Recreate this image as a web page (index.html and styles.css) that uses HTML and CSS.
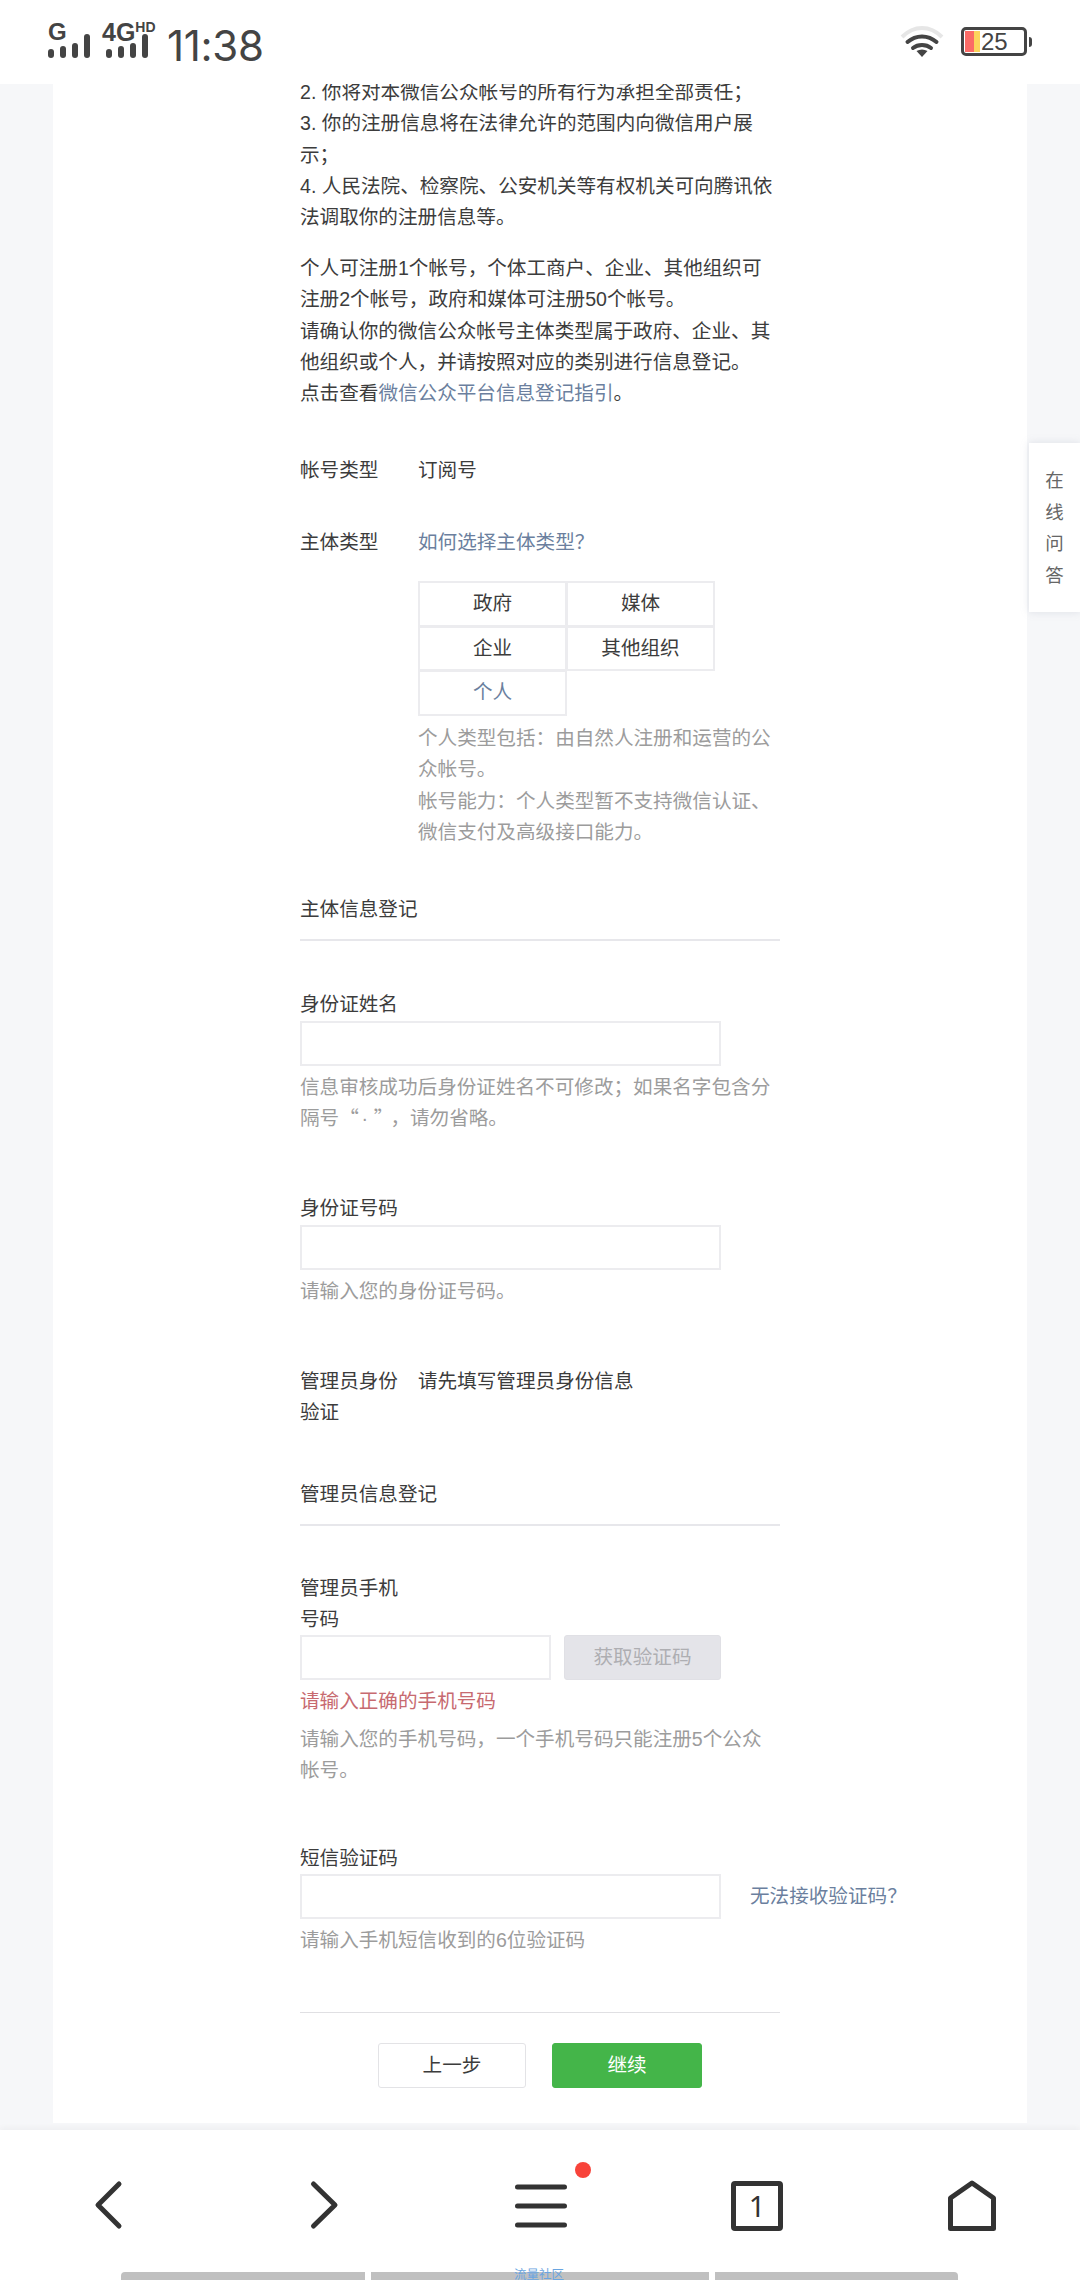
FILE: index.html
```html
<!DOCTYPE html>
<html lang="zh-CN">
<head>
<meta charset="utf-8">
<title>注册</title>
<link rel="stylesheet" href="styles.css">
</head>
<body>
<div class="screen">
  <header class="status">
    <div class="sig sig-g">
      <span class="net">G</span>
      <svg class="bars" width="42" height="24" viewBox="0 0 42 24"><rect x="0" y="15" width="6" height="9" rx="3"/><rect x="12" y="12" width="6" height="12" rx="3"/><rect x="24" y="9" width="6" height="15" rx="3"/><rect x="36" y="0" width="6" height="24" rx="3"/></svg>
    </div>
    <div class="sig sig-4g">
      <span class="net">4G<span class="hd">HD</span></span>
      <svg class="bars" width="42" height="24" viewBox="0 0 42 24"><rect x="0" y="15" width="6" height="9" rx="3"/><rect x="12" y="12" width="6" height="12" rx="3"/><rect x="24" y="9" width="6" height="15" rx="3"/><rect x="36" y="0" width="6" height="24" rx="3"/></svg>
    </div>
    <div class="time">11:38</div>
    <svg class="wifi" width="44" height="32" viewBox="0 0 44 32"><path d="M2 11 C14 -1 30 -1 42 11" fill="none" stroke="#e6e6e6" stroke-width="4"/><path d="M7.500 16 C16 8.500 28 8.500 36.500 16" fill="none" stroke="#444" stroke-width="4" stroke-linecap="round"/><path d="M13 22 C18 18 26 18 31 22" fill="none" stroke="#444" stroke-width="4" stroke-linecap="round"/><path d="M16.500 25 C20 23 24 23 27.500 25 L22 31 Z" fill="#444"/></svg>
    <div class="battery">
      <div class="cell">
        <span class="lvl-r"></span><span class="lvl-y"></span><span class="pct">25</span>
      </div>
      <span class="nub"></span>
    </div>
  </header>

  <main class="page">
    <div class="card">
      <div class="content">
        <p class="para">2. 你将对本微信公众帐号的所有行为承担全部责任；<br>3. 你的注册信息将在法律允许的范围内向微信用户展示；<br>4. 人民法院、检察院、公安机关等有权机关可向腾讯依法调取你的注册信息等<span class="stop">。</span></p>
        <p class="para para-2">个人可注册1个帐号，个体工商户、企业、其他组织可注册2个帐号，政府和媒体可注册50个帐号<span class="stop">。</span><br>请确认你的微信公众帐号主体类型属于政府、企业、其他组织或个人，并请按照对应的类别进行信息登记<span class="stop">。</span><br>点击查看<a class="link">微信公众平台信息登记指引</a><span class="stop">。</span></p>

        <div class="row row-account">
          <div class="row-label">帐号类型</div>
          <div class="row-value">订阅号</div>
        </div>

        <div class="row row-subject">
          <div class="row-label">主体类型</div>
          <div class="row-value">
            <a class="link">如何选择主体类型？</a>
            <div class="choices">
              <div class="choice">政府</div>
              <div class="choice">媒体</div>
              <div class="choice">企业</div>
              <div class="choice">其他组织</div>
              <div class="choice choice-on">个人</div>
            </div>
            <p class="hint">个人类型包括：由自然人注册和运营的公众帐号<span class="stop">。</span><br>帐号能力：个人类型暂不支持微信认证、微信支付及高级接口能力<span class="stop">。</span></p>
          </div>
        </div>

        <h2 class="section section-1">主体信息登记</h2>

        <div class="field field-name">
          <label class="field-label">身份证姓名</label>
          <div class="input"></div>
          <p class="hint">信息审核成功后身份证姓名不可修改；如果名字包含分隔号<span class="q-open">“</span><span class="mid">·</span><span class="q-close">”</span>，请勿省略<span class="stop">。</span></p>
        </div>

        <div class="field field-id">
          <label class="field-label">身份证号码</label>
          <div class="input"></div>
          <p class="hint">请输入您的身份证号码<span class="stop">。</span></p>
        </div>

        <div class="row row-verify">
          <div class="row-label">管理员身份验证</div>
          <div class="row-value">请先填写管理员身份信息</div>
        </div>

        <h2 class="section section-2">管理员信息登记</h2>

        <div class="field field-phone">
          <label class="field-label narrow">管理员手机号码</label>
          <div class="input-line">
            <div class="input input-short"></div>
            <div class="btn-code">获取验证码</div>
          </div>
          <p class="error">请输入正确的手机号码</p>
          <p class="hint hint-after-error">请输入您的手机号码，一个手机号码只能注册5个公众帐号<span class="stop">。</span></p>
        </div>

        <div class="field field-sms">
          <label class="field-label">短信验证码</label>
          <div class="input-line input-line-sms">
            <div class="input"></div>
            <a class="link no-code">无法接收验证码？</a>
          </div>
          <p class="hint">请输入手机短信收到的6位验证码</p>
        </div>

        <div class="actions">
          <div class="btn btn-prev">上一步</div>
          <div class="btn btn-next">继续</div>
        </div>
      </div>
    </div>
    <aside class="qa"><span>在</span><span>线</span><span>问</span><span>答</span></aside>
  </main>

  <nav class="nav">
    <div class="nav-icons">
      <svg width="60" height="60" viewBox="0 0 60 60"><path d="M41 9 L20 30 L41 51" class="ic"/></svg>
      <svg width="60" height="60" viewBox="0 0 60 60"><path d="M18.500 9 L40 30 L18.500 51" class="ic"/></svg>
      <div class="menu-wrap">
        <svg width="60" height="60" viewBox="0 0 60 60"><path d="M6.500 12 H53.500 M6.500 31 H53.500 M6.500 50 H53.500" class="ic"/></svg>
        <span class="dot"></span>
      </div>
      <div class="tab-wrap">
        <svg width="60" height="60" viewBox="0 0 60 60"><rect x="6.500" y="8.500" width="47" height="45" rx="1.500" class="ic"/></svg>
        <span class="tab-n">1</span>
      </div>
      <svg width="60" height="60" viewBox="0 0 60 60"><path d="M30 8 L51.500 23 V53.500 H8.500 V23 Z" class="ic"/></svg>
    </div>
    <div class="nav-bars">
      <span class="bar bar-1"></span>
      <span class="bar bar-2"></span>
      <span class="bar bar-3"></span>
      <span class="nav-label">流量社区</span>
    </div>
  </nav>
</div>
</body>
</html>
```
FILE: styles.css
```css
* { box-sizing: border-box; }
html, body { margin: 0; padding: 0; }
body {
  font-family: "Liberation Sans", "Noto Sans CJK SC", sans-serif;
  font-size: 19.6px;
  line-height: 31.36px;
  color: #3c3c3c;
  background: #f6f7f9;
}
p, h2 { margin: 0; font-weight: 400; font-size: inherit; }
.stop { font-family: "Noto Sans CJK TC", sans-serif; line-height: 0; }
.q-open, .q-close {
  display: inline-block;
  width: 1em;
  line-height: 0;
  font-family: "Noto Sans CJK SC", sans-serif;
}
.q-open { text-align: right; padding-right: 1px; }
.q-close { text-align: left; padding-left: 3px; }
.mid { display: inline-block; width: 12px; line-height: 0; text-align: center; }
.screen {
  width: 1080px;
  height: 2280px;
  display: flex;
  flex-direction: column;
  overflow: hidden;
}

/* status bar */
.status {
  flex: 0 0 84px;
  background: #fff;
  display: flex;
  align-items: flex-start;
  position: relative;
  z-index: 2;
  color: #444;
  padding: 23px 48px 0 48px;
}
.sig { display: flex; flex-direction: column; }
.sig-g { width: 54px; }
.sig-4g { width: 65px; }
.bars { fill: #444; display: block; margin-top: -7px; }
.sig-4g .bars { margin-left: 4px; }
.net {
  font-weight: 700;
  font-size: 24px;
  line-height: 18px;
  height: 18px;
  display: block;
  white-space: nowrap;
}
.sig-4g .net { font-size: 25px; margin-left: 0; }
.hd { font-size: 14px; vertical-align: 9px; line-height: 0; }
.time {
  font-family: Inter, "Liberation Sans", sans-serif;
  font-size: 42px;
  line-height: 44px;
  letter-spacing: -.3px;
  margin-top: 1px;
}
.wifi { margin-left: auto; margin-right: 17px; margin-top: 3px; }
.battery { display: flex; align-items: center; margin-top: 4px; }
.cell {
  width: 66px;
  height: 29px;
  border: 3px solid #444;
  border-radius: 5px;
  display: flex;
  align-items: center;
  padding: 0 0 0 1px;
}
.lvl-r { width: 9px; height: 21px; background: #fb6b66; }
.lvl-y { width: 6px; height: 21px; background: #fcd45c; }
.pct { font-size: 24px; line-height: 23px; margin-left: 1px; color: #444; }
.nub { width: 3px; height: 10px; background: #444; border-radius: 0 3px 3px 0; margin-left: 2px; }

/* page */
.page {
  flex: 1 1 auto;
  min-height: 0;
  position: relative;
  overflow: hidden;
}
.card {
  margin: 0 53px;
  width: 974px;
  height: 100%;
  background: #fff;
}
.content {
  margin-top: -7px;
  padding-left: 247px;
  width: 727px;
}
.para { width: 480px; }
.para-2 { margin-top: 19px; }
.link { color: #6b7f9e; text-decoration: none; }

.row { display: flex; width: 480px; }
.row-label { flex: 0 0 100px; margin-right: 18px; }
.row-value { flex: 1 1 auto; min-width: 0; }
.row-account { margin-top: 45px; }
.row-subject { margin-top: 41px; }
.choices {
  display: grid;
  grid-template-columns: 148px 148px;
  margin-top: 23px;
  width: 296px;
}
.choice {
  height: 45.500px;
  line-height: 41px;
  border: 2px solid #ececef;
  text-align: center;
  margin: 0 -1px -1px 0;
}
.choice-on { color: #6b7f9e; }
.hint { color: #9c9c9c; }
.choices + .hint { margin-top: 8px; }

.section {
  width: 480px;
  border-bottom: 2px solid #e7e7eb;
  height: 62px;
  padding-top: 15px;
}
.section-1 { margin-top: 31px; }
.section-2 { margin-top: 35px; }

.field { width: 480px; }
.field-name { margin-top: 48px; }
.field-id { margin-top: 59px; }
.field-phone { margin-top: 47px; }
.field-sms { margin-top: 56px; }
.field-label { display: block; }
.narrow { width: 110px; }
.input {
  width: 421px;
  height: 45px;
  border: 2px solid #ececef;
  background: #fff;
}
.field .hint, .field .error { margin-top: 6px; }
.error { color: #c76a70; }
.input-line { display: flex; align-items: center; }
.input-short { width: 251px; }
.btn-code {
  margin-left: 13px;
  width: 157px;
  height: 45px;
  line-height: 43px;
  background: #e4e4e9;
  color: #aeaeb2;
  text-align: center;
  border: 1px solid #e0e0e5;
  border-radius: 3px;
}
.input-line-sms { width: 700px; }
.no-code { margin-left: 29px; white-space: nowrap; }
.row-verify { margin-top: 59px; }

.actions {
  width: 480px;
  margin-top: 56px;
  border-top: 1px solid #e0e0e3;
  padding-top: 30px;
  display: flex;
  justify-content: center;
  gap: 26px;
}
.btn {
  height: 45px;
  line-height: 43px;
  width: 148px;
  text-align: center;
  border-radius: 3px;
  border: 1px solid #e3e3e6;
  background: #fff;
}
.btn-next { width: 150px; background: #44b549; border-color: #44b549; color: #fff; }

.qa {
  position: absolute;
  right: 0;
  top: 359px;
  width: 51px;
  height: 169px;
  background: #fff;
  box-shadow: 0 0 8px rgba(150, 160, 180, .25);
  display: flex;
  flex-direction: column;
  align-items: center;
  padding-top: 22px;
  color: #666;
  font-size: 18.500px;
  line-height: 31.700px;
}

/* bottom nav */
.nav {
  flex: 0 0 150px;
  background: #fff;
  position: relative;
  z-index: 2;
  box-shadow: 0 -2px 6px rgba(0, 0, 0, .04);
  display: flex;
  flex-direction: column;
}
.nav-icons {
  display: grid;
  grid-template-columns: 217px 216px 216px 215px 60px;
  padding: 45px 0 0 78px;
  height: 142px;
  align-content: start;
}
.nav-icons svg { display: block; }
.ic { fill: none; stroke: #333; stroke-width: 5; stroke-linecap: round; stroke-linejoin: round; }
.menu-wrap, .tab-wrap { position: relative; width: 60px; height: 60px; }
.dot {
  position: absolute;
  left: 64px;
  top: -13px;
  width: 16px;
  height: 16px;
  border-radius: 50%;
  background: #f8433a;
}
.tab-n {
  position: absolute;
  left: 0;
  top: 8px;
  width: 60px;
  text-align: center;
  font-family: "Noto Sans", sans-serif;
  font-size: 29px;
  line-height: 45px;
  color: #333;
}
.nav-bars {
  display: flex;
  gap: 6px;
  height: 8px;
  padding-left: 121px;
  position: relative;
}
.bar { display: block; height: 8px; background: #c0c0c0; }
.bar-1 { width: 244px; border-radius: 4px 0 0 0; }
.bar-2 { width: 338px; }
.bar-3 { width: 243px; border-radius: 0 4px 0 0; }
.nav-label {
  position: absolute;
  left: 514px;
  top: -4px;
  font-size: 12.500px;
  line-height: 14px;
  color: #6aa5e0;
}
```
